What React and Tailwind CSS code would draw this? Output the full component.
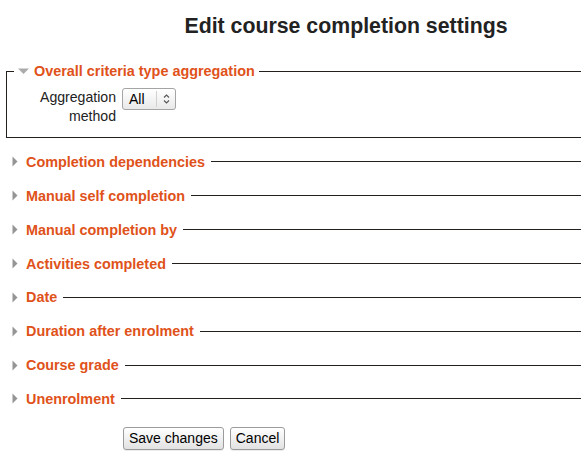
import React from "react";

const sections = [
  "Completion dependencies",
  "Manual self completion",
  "Manual completion by",
  "Activities completed",
  "Date",
  "Duration after enrolment",
  "Course grade",
  "Unenrolment",
];

function RightTri() {
  return (
    <svg width="6" height="11" viewBox="0 0 6 11" className="shrink-0">
      <polygon points="0.5,0.5 5.5,5.5 0.5,10.5" fill="#959595" />
    </svg>
  );
}

function DownTri() {
  return (
    <svg width="11" height="6" viewBox="0 0 11 6" className="shrink-0">
      <polygon points="0,0.5 11,0.5 5.5,6" fill="#ababab" />
    </svg>
  );
}

function Btn({ children }) {
  return (
    <button
      type="button"
      className="h-[23px] px-[5px] rounded-[3px] border border-[#9b9b9b] bg-gradient-to-b from-white to-[#e2e2e2] text-[14px] leading-[20px] text-black shadow-[0_1px_0_rgba(0,0,0,0.08)]"
    >
      {children}
    </button>
  );
}

export default function App() {
  return (
    <div className="w-[581px] h-[464px] overflow-hidden bg-white font-['Liberation_Sans',Arial,sans-serif] text-[#222]">
      <h2 className="pl-[111px] pt-[12px] text-center text-[21.3px] leading-[28px] font-bold text-[#222]">
        Edit course completion settings
      </h2>
      <form className="mt-[21px] pl-[6px]">
        <fieldset className="border border-r-0 border-[#231f1c] pb-[11px]">
          <legend className="ml-[7px] px-[4px] flex items-center gap-[5px] text-[14.4px] leading-[20px] font-bold text-[#e0521a]">
            <DownTri />
            <span>Overall criteria type aggregation</span>
          </legend>
          <div className="pt-[7px] flex items-start gap-[6px]">
            <label className="w-[109px] text-right text-[14.1px] leading-[19px] text-[#222]">
              Aggregation
              <br />
              method
            </label>
            <div className="flex h-[22px] w-[54px] items-stretch rounded-[3px] border border-[#a4a4a4] bg-gradient-to-b from-white to-[#e9e9e9] text-[14px] leading-[20px] text-black">
              <span className="w-[33px] pl-[6px] flex items-center">All</span>
              <span className="w-px bg-[#d0d0d0] my-[2px]" />
              <span className="flex-1 flex items-center justify-center">
                <svg width="7" height="10" viewBox="0 0 7 10">
                  <path d="M1 3.5 L3.5 1 L6 3.5 M1 6.5 L3.5 9 L6 6.5" fill="none" stroke="#555" strokeWidth="1.1" />
                </svg>
              </span>
            </div>
          </div>
        </fieldset>
        <div className="mt-[7px]">
          {sections.map((s) => (
            <div key={s} className="h-[33.86px] flex items-center pl-[6px]">
              <RightTri />
              <span className="ml-[8px] text-[14.4px] leading-[20px] font-bold text-[#e0521a] whitespace-nowrap">
                {s}
              </span>
              <span className="ml-[6px] flex-1 h-px bg-[#231f1c]" />
            </div>
          ))}
        </div>
        <div className="mt-[11px] pl-[117px] flex gap-[6px]">
          <Btn>Save changes</Btn>
          <Btn>Cancel</Btn>
        </div>
      </form>
    </div>
  );
}
